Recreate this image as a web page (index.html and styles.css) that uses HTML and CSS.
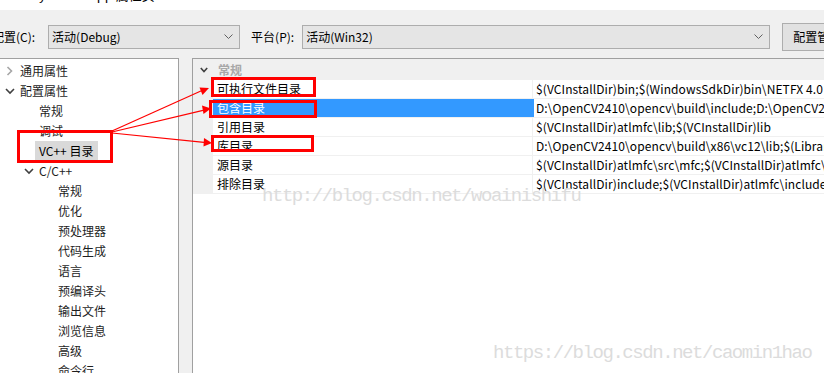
FILE: index.html
```html
<!DOCTYPE html>
<html>
<head>
<meta charset="utf-8">
<link rel="stylesheet" href="styles.css">
</head>
<body>
<div class="titlebar"><span class="title">SaaSDynNotesApp 属性页</span></div>
<div class="toolbar">
  <span class="label first">配置(C):</span>
  <div class="combo combo-config"><span>活动(Debug)</span><svg class="chev" width="9" height="6" viewBox="0 0 9 6"><path d="M0.5 0.5 L4.5 4.5 L8.5 0.5" fill="none" stroke="#606060" stroke-width="1"/></svg></div>
  <span class="label second">平台(P):</span>
  <div class="combo combo-platform"><span>活动(Win32)</span><svg class="chev" width="9" height="6" viewBox="0 0 9 6"><path d="M0.5 0.5 L4.5 4.5 L8.5 0.5" fill="none" stroke="#606060" stroke-width="1"/></svg></div>
  <div class="button">配置管理器(O)...</div>
</div>
<div class="main">
  <div class="tree">
    <div class="node lv0"><svg class="arrow" width="8" height="10" viewBox="0 0 8 10"><path d="M1.5 1 L5.5 5 L1.5 9" fill="none" stroke="#a6a6a6" stroke-width="1.6"/></svg><span>通用属性</span></div>
    <div class="node lv0"><svg class="arrow" width="10" height="8" viewBox="0 0 10 8"><path d="M1 2 L5 6 L9 2" fill="none" stroke="#404040" stroke-width="1.6"/></svg><span>配置属性</span></div>
    <div class="node lv1"><span>常规</span></div>
    <div class="node lv1"><span>调试</span></div>
    <div class="node lv1"><span class="sel">VC++ 目录</span></div>
    <div class="node lv1b"><svg class="arrow" width="10" height="8" viewBox="0 0 10 8"><path d="M1 2 L5 6 L9 2" fill="none" stroke="#404040" stroke-width="1.6"/></svg><span>C/C++</span></div>
    <div class="node lv2"><span>常规</span></div>
    <div class="node lv2"><span>优化</span></div>
    <div class="node lv2"><span>预处理器</span></div>
    <div class="node lv2"><span>代码生成</span></div>
    <div class="node lv2"><span>语言</span></div>
    <div class="node lv2"><span>预编译头</span></div>
    <div class="node lv2"><span>输出文件</span></div>
    <div class="node lv2"><span>浏览信息</span></div>
    <div class="node lv2"><span>高级</span></div>
    <div class="node lv2"><span>命令行</span></div>
  </div>
  <div class="grid">
    <div class="cat">
      <div class="gutter"><svg width="8" height="6" viewBox="0 0 8 6"><path d="M0.8 1 L4 4.5 L7.2 1" fill="none" stroke="#404040" stroke-width="1.6"/></svg></div>
      <div class="cat-name">常规</div>
    </div>
    <div class="row"><div class="gutter"></div><div class="name">可执行文件目录</div><div class="value">$(VCInstallDir)bin;$(WindowsSdkDir)bin\NETFX 4.0 Tools;$(WindowsSdkDir)bin;$(VSInstallDir)Common7\Tools\bin</div></div>
    <div class="row selected"><div class="gutter"></div><div class="name">包含目录</div><div class="value">D:\OpenCV2410\opencv\build\include;D:\OpenCV2410\opencv\build\include\opencv</div></div>
    <div class="row"><div class="gutter"></div><div class="name">引用目录</div><div class="value">$(VCInstallDir)atlmfc\lib;$(VCInstallDir)lib</div></div>
    <div class="row"><div class="gutter"></div><div class="name">库目录</div><div class="value">D:\OpenCV2410\opencv\build\x86\vc12\lib;$(LibraryPath)</div></div>
    <div class="row"><div class="gutter"></div><div class="name">源目录</div><div class="value">$(VCInstallDir)atlmfc\src\mfc;$(VCInstallDir)atlmfc\src\mfcm;$(VCInstallDir)atlmfc\src\atl</div></div>
    <div class="row"><div class="gutter"></div><div class="name">排除目录</div><div class="value">$(VCInstallDir)include;$(VCInstallDir)atlmfc\include;$(WindowsSdkDir)include</div></div>
  </div>
</div>
<div class="watermark wm1">http://blog.csdn.net/woainishifu</div>
<div class="watermark wm2">https://blog.csdn.net/caomin1hao</div>
<svg class="annot" width="824" height="373" viewBox="0 0 824 373">
  <g fill="none" stroke="#ff0000" stroke-width="3">
    <rect x="18.5" y="131.5" width="93" height="30"/>
    <rect x="212.5" y="78.5" width="102" height="17"/>
    <rect x="210.5" y="101.5" width="105" height="15"/>
    <rect x="212.5" y="136.5" width="100" height="14"/>
  </g>
  <g stroke="#ff0000" stroke-width="1.2">
    <line x1="112" y1="131" x2="202" y2="90.5"/>
    <line x1="112" y1="132" x2="203" y2="110.3"/>
    <line x1="112" y1="133" x2="204" y2="142.3"/>
  </g>
  <g fill="#ff0000">
    <polygon points="209,88 199.5,87.5 202.5,95"/>
    <polygon points="211,108.5 202,105.5 203.5,114"/>
    <polygon points="212,143 204,138 203.5,146.5"/>
  </g>
</svg>
</body>
</html>
```
FILE: styles.css
```css
html, body {
  margin: 0;
  padding: 0;
}
body {
  width: 824px;
  height: 373px;
  overflow: hidden;
  position: relative;
  background: #f0f0f0;
  font-family: "Noto Sans CJK SC", "Noto Sans", sans-serif;
  font-size: 12px;
  color: #000;
}
.titlebar {
  height: 10px;
  background: #fff;
  overflow: hidden;
  position: relative;
}
.title {
  display: block;
  margin-top: -14px;
  line-height: 18px;
  font-size: 13px;
  color: #000;
  white-space: nowrap;
}
.toolbar {
  height: 48px;
  display: flex;
  align-items: flex-start;
  padding-top: 15px;
  box-sizing: border-box;
  white-space: nowrap;
}
.label {
  line-height: 24px;
}
.label.first {
  margin-left: -8px;
  margin-right: 13px;
}
.label.second {
  margin-left: 11px;
  margin-right: 8px;
}
.combo {
  height: 24px;
  box-sizing: border-box;
  border: 1px solid #adadad;
  background: #e5e5e5;
  display: flex;
  align-items: center;
  justify-content: space-between;
  padding: 0 4px 0 3px;
  flex: none;
}
.combo span {
  line-height: 22px;
}
.combo-config {
  width: 192px;
}
.combo-platform {
  width: 468px;
}
.chev {
  margin-right: 2px;
}
.button {
  margin-left: 12px;
  margin-top: -2px;
  height: 28px;
  box-sizing: border-box;
  border: 1px solid #adadad;
  background: #e1e1e1;
  padding: 0 10px;
  line-height: 26px;
  flex: none;
}
.main {
  display: flex;
  height: 315px;
}
.tree {
  width: 179px;
  flex: none;
  background: #fff;
  border-top: 1px solid #a0a0a0;
  border-right: 1px solid #a0a0a0;
  padding-top: 2px;
  box-sizing: border-box;
}
.node {
  height: 20px;
  display: flex;
  align-items: center;
  white-space: nowrap;
  color: #1e1e1e;
}
.node span {
  line-height: 20px;
}
.node.lv0 {
  padding-left: 5px;
}
.node.lv0 .arrow {
  width: 10px;
  margin-right: 5px;
}
.node.lv1 {
  padding-left: 39px;
}
.node.lv1b {
  padding-left: 24px;
}
.node.lv1b .arrow {
  margin-right: 5px;
}
.node.lv2 {
  padding-left: 58px;
}
.node .sel {
  background: #d9d9d9;
  margin-left: -4px;
  padding: 0 5px 0 4px;
  color: #000;
}
.grid {
  margin-left: 13px;
  flex: 1;
  background: #fff;
  border-top: 1px solid #a0a0a0;
  border-left: 1px solid #a0a0a0;
  min-width: 0;
}
.cat {
  height: 21px;
  display: flex;
  align-items: center;
  background: #f0f0f0;
}
.cat .gutter {
  width: 20px;
  display: flex;
  justify-content: center;
  align-items: center;
  padding-left: 2px;
  box-sizing: border-box;
}
.cat-name {
  padding-left: 5px;
  color: #a8a8a8;
  font-weight: bold;
  line-height: 21px;
}
.row {
  height: 19px;
  display: flex;
  border-bottom: 1px solid #f0f0f0;
  box-sizing: border-box;
  white-space: nowrap;
}
.row .gutter {
  width: 20px;
  flex: none;
  background: #f0f0f0;
}
.row .name {
  width: 320px;
  flex: none;
  padding-left: 4px;
  box-sizing: border-box;
  line-height: 18px;
  border-right: 1px solid #f0f0f0;
}
.row .value {
  padding-left: 3px;
  line-height: 18px;
  overflow: hidden;
  letter-spacing: 0.1px;
}
.row.selected .name {
  background: #3399ff;
  color: #fff;
  border-right-color: #3399ff;
}
.row.selected .value {
  box-shadow: inset 1px 0 0 #3399ff;
}
.watermark {
  position: absolute;
  font-family: "Liberation Mono", monospace;
  font-size: 19px;
  letter-spacing: -1.45px;
  color: #dcdcdc;
  white-space: nowrap;
  line-height: 20px;
}
.wm1 {
  left: 262px;
  top: 186px;
}
.wm2 {
  left: 493px;
  top: 343px;
}
.annot {
  position: absolute;
  left: 0;
  top: 0;
  pointer-events: none;
}
```
